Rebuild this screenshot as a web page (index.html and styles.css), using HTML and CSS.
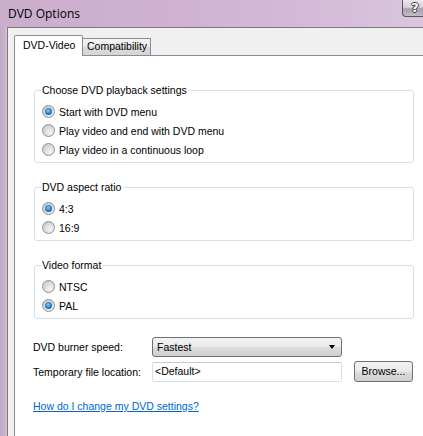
FILE: index.html
```html
<!DOCTYPE html>
<html>
<head>
<meta charset="utf-8">
<title>DVD Options</title>
<link rel="stylesheet" href="styles.css">
</head>
<body>
<div class="window">
  <div class="titlebar">
    <span class="title">DVD Options</span>
    <div class="help">?</div>
  </div>
  <div class="frame">
    <div class="edge"></div>
    <div class="client">
      <div class="tabs">
        <div class="tab active">DVD-Video</div>
        <div class="tab">Compatibility</div>
      </div>
      <div class="panel">
        <fieldset class="group">
          <legend>Choose DVD playback settings</legend>
          <div class="options">
            <label class="opt"><span class="radio checked"></span>Start with DVD menu</label>
            <label class="opt"><span class="radio"></span>Play video and end with DVD menu</label>
            <label class="opt"><span class="radio"></span>Play video in a continuous loop</label>
          </div>
        </fieldset>
        <fieldset class="group">
          <legend>DVD aspect ratio</legend>
          <div class="options">
            <label class="opt"><span class="radio checked"></span>4:3</label>
            <label class="opt"><span class="radio"></span>16:9</label>
          </div>
        </fieldset>
        <fieldset class="group">
          <legend>Video format</legend>
          <div class="options">
            <label class="opt"><span class="radio"></span>NTSC</label>
            <label class="opt"><span class="radio checked"></span>PAL</label>
          </div>
        </fieldset>
        <div class="fields">
          <div class="field">
            <span class="flabel">DVD burner speed:</span>
            <div class="select"><span>Fastest</span><span class="arrow"></span></div>
          </div>
          <div class="field second">
            <span class="flabel">Temporary file location:</span>
            <div class="input">&lt;Default&gt;</div>
            <div class="button">Browse...</div>
          </div>
        </div>
        <a class="link" href="#">How do I change my DVD settings?</a>
      </div>
    </div>
  </div>
</div>
</body>
</html>
```
FILE: styles.css
```css
html, body {
  margin: 0;
  padding: 0;
}
body {
  width: 423px;
  height: 436px;
  overflow: hidden;
  font-family: "Liberation Sans", Arial, sans-serif;
  font-size: 10.5px;
  color: #000;
}
.window {
  display: flex;
  flex-direction: column;
  width: 423px;
  height: 436px;
  overflow: hidden;
}
.titlebar {
  height: 27px;
  flex: none;
  display: flex;
  justify-content: space-between;
  align-items: flex-start;
  background: linear-gradient(90deg, #c9aecb 0%, #d0b1d3 40%, #d4b9d8 70%, #d9c6dd 100%);
}
.title {
  font-family: "Open Sans", sans-serif;
  font-size: 12px;
  line-height: 16px;
  margin: 6px 0 0 8px;
  color: #000;
}
.help {
  width: 20px;
  height: 16px;
  border: 1px solid #5b5560;
  border-top: none;
  border-right: none;
  border-bottom-left-radius: 4px;
  background: linear-gradient(180deg, #ece6ef 0%, #d8d0dd 45%, #a79fae 55%, #c3bcc9 100%);
  color: #fff;
  font-family: "DejaVu Sans", sans-serif;
  font-weight: bold;
  font-size: 13px;
  line-height: 16px;
  text-align: center;
  text-indent: 4px;
  text-shadow: 1px 0 0 #3a3a3a, -1px 0 0 #3a3a3a, 0 1px 0 #3a3a3a, 0 -1px 0 #3a3a3a;
}
.frame {
  flex: 1;
  display: flex;
  min-height: 0;
}
.edge {
  width: 7px;
  flex: none;
  background: linear-gradient(90deg, #c3a8c5 0%, #c9b1cb 70%, #d6c8d8 100%);
}
.client {
  flex: 1;
  display: flex;
  flex-direction: column;
  background: #f0f0f0;
  border-top: 1px solid #7d7880;
  border-left: 1px solid #7d7880;
  padding: 7px 0 0 6px;
  min-width: 0;
}
.tabs {
  display: flex;
  align-items: flex-end;
  height: 20px;
  flex: none;
  position: relative;
  z-index: 1;
}
.tab {
  box-sizing: border-box;
  height: 17px;
  line-height: 15px;
  padding: 0 3px 0 4px;
  border: 1px solid #898c95;
  border-bottom: none;
  background: linear-gradient(180deg, #f3f3f3 0%, #ebebeb 50%, #dcdcdc 51%, #d5d5d5 100%);
  margin-left: -1px;
}
.tab.active {
  height: 21px;
  margin-left: 0;
  margin-bottom: -1px;
  width: 69px;
  padding: 0 0 0 8px;
  line-height: 19px;
  background: #fff;
  border-radius: 2px 2px 0 0;
}
.panel {
  flex: 1;
  background: #fff;
  border-top: 1px solid #898c95;
  border-left: 1px solid #898c95;
  padding: 28px 0 0 19px;
}
.group {
  box-sizing: border-box;
  width: 380px;
  margin: 0 0 18px 0;
  padding: 0 5px 3px 7px;
  border: 1px solid #d5dfe5;
  border-radius: 3px;
}
.group legend {
  padding: 0 2px 0 1px;
  margin-left: -1px;
  line-height: 13px;
}
.options {
  display: flex;
  flex-direction: column;
  padding-top: 5px;
}
.opt {
  height: 19px;
  display: flex;
  align-items: center;
  gap: 4px;
}
.radio {
  box-sizing: border-box;
  width: 13px;
  height: 13px;
  border-radius: 50%;
  border: 1px solid #8f9092;
  background: radial-gradient(circle at 65% 70%, #f4f4f4 0%, #dcdcdc 50%, #bdbdbd 100%);
  display: flex;
  align-items: center;
  justify-content: center;
}
.radio.checked::after {
  content: "";
  width: 7px;
  height: 7px;
  border-radius: 50%;
  background: radial-gradient(circle at 45% 40%, #8fd0ff 0%, #2a86d0 45%, #0c3f73 100%);
}
.fields {
  margin-top: 2px;
  display: flex;
  flex-direction: column;
}
.field {
  display: flex;
  align-items: center;
  height: 20px;
}
.field.second {
  margin-top: 4px;
  height: 21px;
}
.flabel {
  width: 118px;
  flex: none;
  margin-left: -1px;
  padding-right: 1px;
}
.select {
  box-sizing: border-box;
  width: 190px;
  height: 20px;
  border: 1px solid #707070;
  border-radius: 3px;
  background: linear-gradient(180deg, #f3f3f3 0%, #ebebeb 48%, #dddddd 52%, #cfcfcf 100%);
  display: flex;
  align-items: center;
  justify-content: space-between;
  padding: 0 6px 0 4px;
}
.arrow {
  width: 0;
  height: 0;
  border-left: 3.5px solid transparent;
  border-right: 3.5px solid transparent;
  border-top: 4px solid #000;
}
.input {
  box-sizing: border-box;
  width: 190px;
  height: 20px;
  border: 1px solid #dadde2;
  border-top-color: #c6c9ce;
  border-radius: 2px;
  line-height: 17px;
  padding-left: 2px;
  background: #fff;
}
.button {
  box-sizing: border-box;
  width: 59px;
  height: 21px;
  margin-left: 12px;
  border: 1px solid #707070;
  border-radius: 3px;
  background: linear-gradient(180deg, #f2f2f2 0%, #ebebeb 48%, #dddddd 52%, #cfcfcf 100%);
  line-height: 19px;
  text-align: center;
}
.link {
  display: inline-block;
  margin-top: 18px;
  margin-left: -1px;
  line-height: 13px;
  color: #0066cc;
  text-decoration: underline;
}
```
